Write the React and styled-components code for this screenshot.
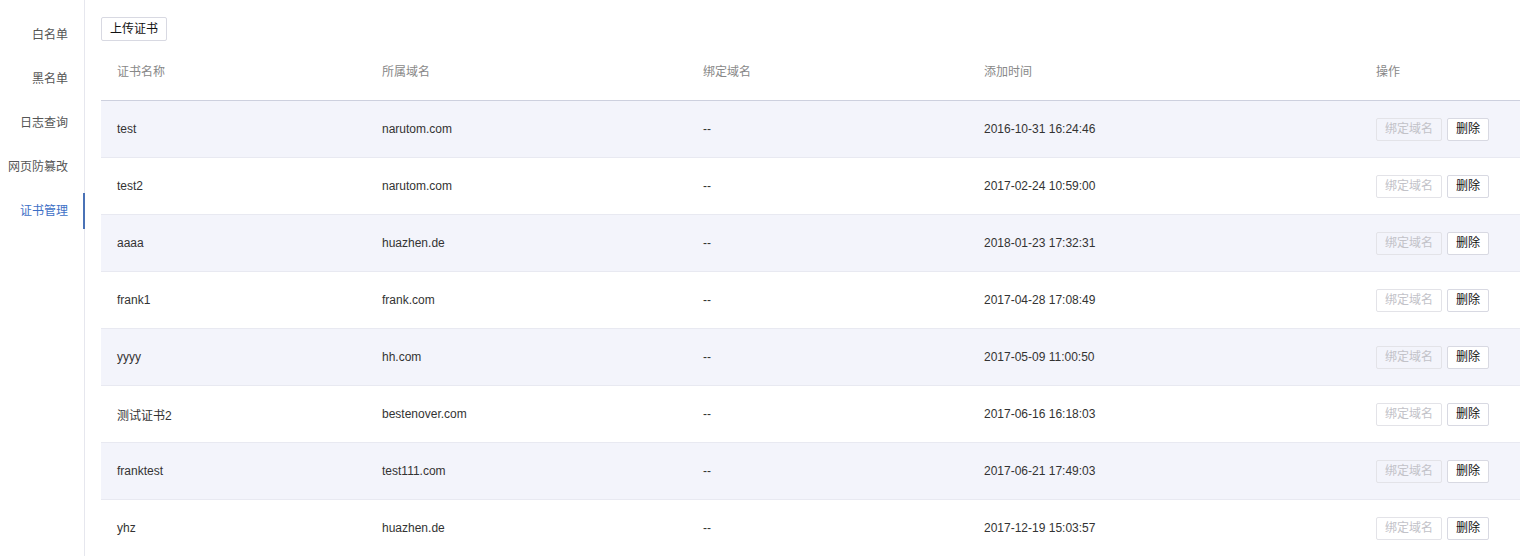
import styled, { createGlobalStyle, css } from "styled-components";

const GlobalStyle = createGlobalStyle`
  body {
    margin: 0;
    background: #fff;
    font-family: "Liberation Sans", "Noto Sans CJK SC", sans-serif;
    font-size: 12px;
    color: #333;
  }
`;

const BLUE = "#3d6fc6";

const menu = ["白名单", "黑名单", "日志查询", "网页防篡改", "证书管理"];

const certs = [
  ["test", "narutom.com", "--", "2016-10-31 16:24:46"],
  ["test2", "narutom.com", "--", "2017-02-24 10:59:00"],
  ["aaaa", "huazhen.de", "--", "2018-01-23 17:32:31"],
  ["frank1", "frank.com", "--", "2017-04-28 17:08:49"],
  ["yyyy", "hh.com", "--", "2017-05-09 11:00:50"],
  ["测试证书2", "bestenover.com", "--", "2017-06-16 16:18:03"],
  ["franktest", "test111.com", "--", "2017-06-21 17:49:03"],
  ["yhz", "huazhen.de", "--", "2017-12-19 15:03:57"],
];

const Layout = styled.div`
  display: flex;
  min-height: 100vh;
`;

const Sidebar = styled.nav`
  width: 84px;
  flex-shrink: 0;
  border-right: 1px solid #e6e7ee;
  padding-top: 17px;
  display: flex;
  flex-direction: column;
  row-gap: 8px;
`;

const MenuItem = styled.div`
  height: 36px;
  line-height: 36px;
  text-align: right;
  padding-right: 15px;
  margin-right: -1px;
  color: #555;
  font-size: 12px;
  border-right: 2px solid transparent;

  ${({ active }) =>
    active &&
    css`
      color: ${BLUE};
      border-right-color: #4a72b6;
    `}
`;

const Main = styled.main`
  flex: 1;
  padding: 17px 0 0 16px;
  min-width: 0;
`;

const Button = styled.button`
  height: 24px;
  padding: 0 8px;
  border: 1px solid #d8d9e2;
  border-radius: 2px;
  background: #fff;
  color: #111;
  font-family: inherit;
  font-size: 12px;
  line-height: 22px;
  cursor: pointer;

  &:disabled {
    color: #c2c2c8;
    border-color: #e3e3e8;
    background: transparent;
    cursor: not-allowed;
  }
`;

const SmallButton = styled(Button)`
  height: 23px;
  line-height: 21px;
`;

const Row = styled.div`
  display: grid;
  grid-template-columns: 265px 321px 281px 392px 1fr;
  align-items: center;
  height: 56px;
  border-bottom: 1px solid #e8e9f1;

  ${({ striped }) =>
    striped &&
    css`
      background: #f3f4fb;
    `}
`;

const HeadRow = styled(Row)`
  height: 58px;
  padding-bottom: 1px;
  border-bottom-color: #cdd0de;
  color: #888;
`;

const Cell = styled.div`
  padding-left: 16px;
  white-space: nowrap;
`;

const Actions = styled(Cell)`
  display: flex;
  column-gap: 5px;
`;

export default function App() {
  return (
    <Layout>
      <GlobalStyle />
      <Sidebar>
        {menu.map((item) => (
          <MenuItem key={item} active={item === "证书管理"}>
            {item}
          </MenuItem>
        ))}
      </Sidebar>
      <Main>
        <Button>上传证书</Button>
        <HeadRow>
          <Cell>证书名称</Cell>
          <Cell>所属域名</Cell>
          <Cell>绑定域名</Cell>
          <Cell>添加时间</Cell>
          <Cell>操作</Cell>
        </HeadRow>
        {certs.map(([name, domain, bound, time], i) => (
          <Row key={name} striped={i % 2 === 0}>
            <Cell>{name}</Cell>
            <Cell>{domain}</Cell>
            <Cell>{bound}</Cell>
            <Cell>{time}</Cell>
            <Actions>
              <SmallButton disabled>绑定域名</SmallButton>
              <SmallButton>删除</SmallButton>
            </Actions>
          </Row>
        ))}
      </Main>
    </Layout>
  );
}
